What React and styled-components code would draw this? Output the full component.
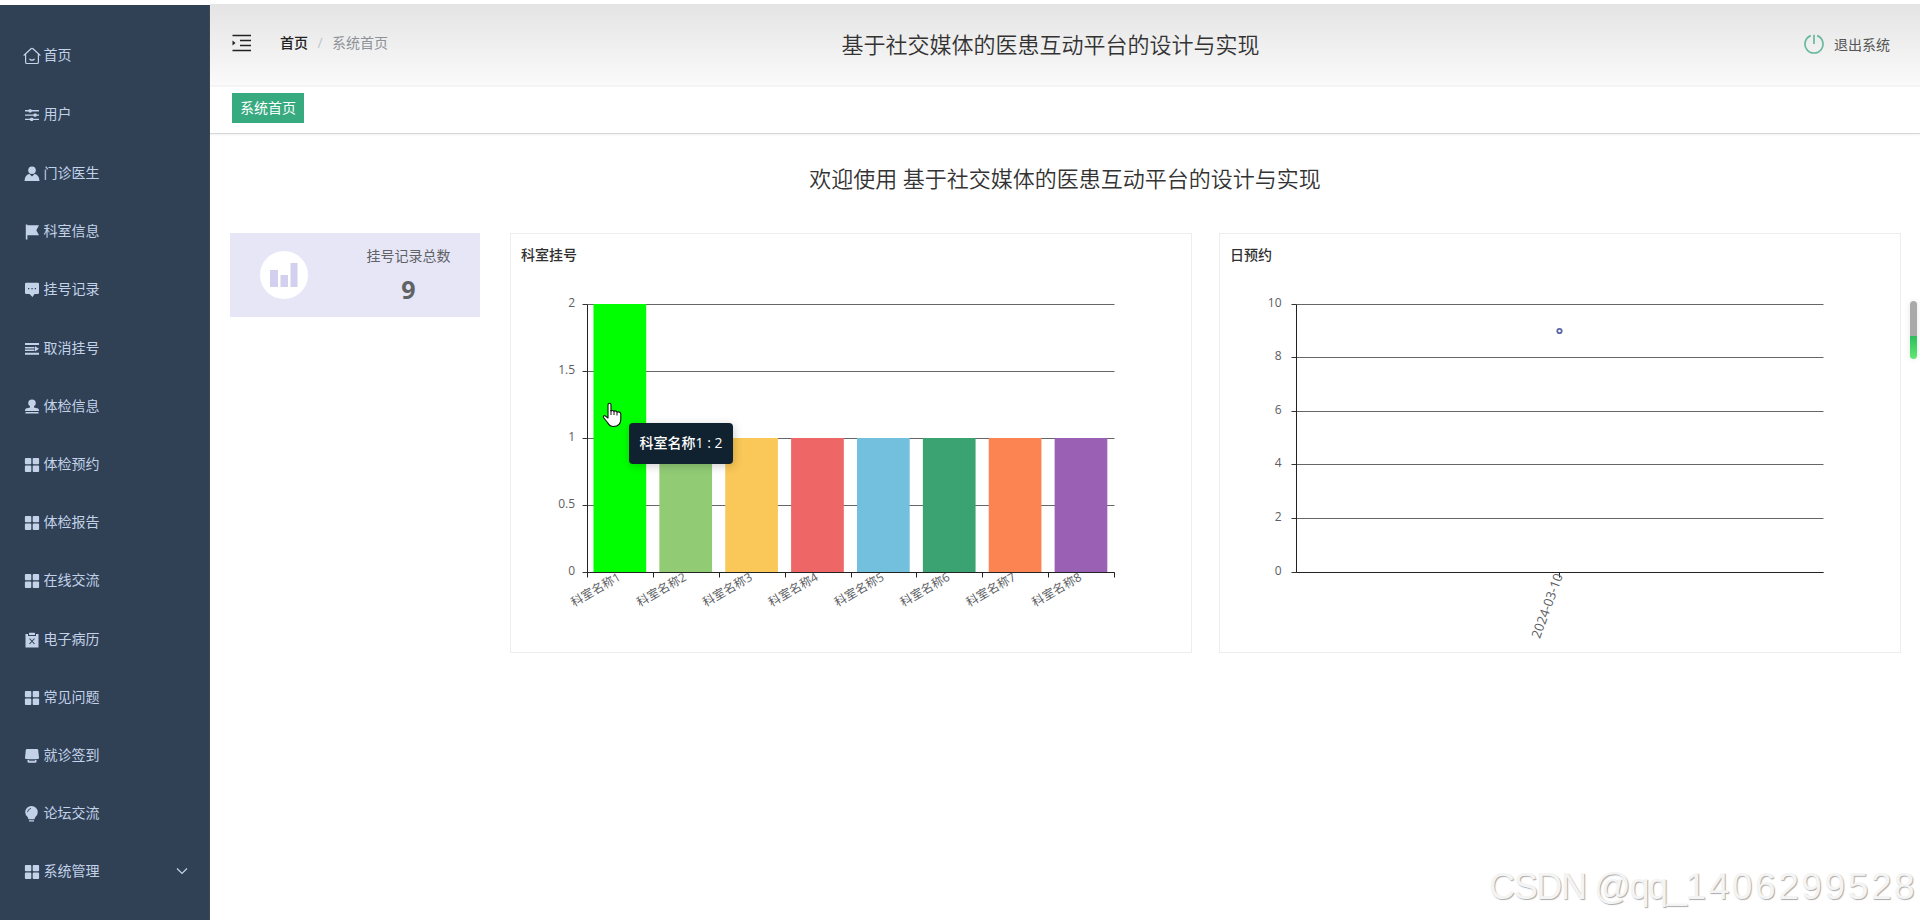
import React from "react";
import styled, { createGlobalStyle } from "styled-components";

const GlobalStyle = createGlobalStyle`
  * { box-sizing: border-box; }
  body {
    margin: 0;
    background: #fff;
    font-family: "Open Sans", "Noto Sans CJK SC", sans-serif;
    font-size: 14px;
    color: #333;
    overflow: hidden;
  }
`;

const Page = styled.div`
  position: relative;
  display: flex;
  width: 1920px;
  height: 920px;
  padding-top: 4px;
`;

const Sidebar = styled.nav`
  width: 210px;
  height: 915px;
  margin-top: 1px;
  padding-top: 19.8px;
  flex: none;
  background: #304156;
  border-right: 1px solid #40474e;
`;

const MenuItem = styled.div`
  display: flex;
  align-items: center;
  height: ${(p) => (p.$tall ? 59.6 : 58.2)}px;
  padding: 0 21px 0 ${(p) => (p.$wide ? 23 : 24)}px;
  color: #c3d2e8;
  line-height: 20px;
`;

const MenuIcon = styled.svg`
  flex: none;
  width: ${(p) => (p.$wide ? 18 : 16)}px;
  height: ${(p) => (p.$wide ? 18 : 16)}px;
  margin: 2px ${(p) => (p.$wide ? 2.5 : 3.5)}px 0 0;
  fill: currentColor;
`;

const MenuLabel = styled.span`
  flex: 1;
`;

const Arrow = styled.svg`
  width: 12px;
  height: 8px;
  fill: none;
  stroke: currentColor;
  stroke-width: 1.2;
`;

const Main = styled.main`
  flex: 1;
  min-width: 0;
`;

const Header = styled.header`
  display: grid;
  grid-template-columns: 1fr auto 1fr;
  align-items: center;
  height: 83px;
  padding: 0 30px 0 22px;
  background: linear-gradient(#e4e4e4, #fafafa);
  border-bottom: 2px solid #f5f5f5;
`;

const HeaderLeft = styled.div`
  display: flex;
  align-items: center;
  padding-bottom: 5px;
`;

const FoldIcon = styled.svg`
  width: 20px;
  height: 18px;
  margin: 1px 28px 0 0;
  stroke: #222;
  stroke-width: 1.3;
  fill: #222;
`;

const Crumb = styled.span`
  color: ${(p) => (p.$current ? "#8e9297" : "#222")};
  font-weight: ${(p) => (p.$current ? 400 : 500)};
`;

const Slash = styled.span`
  width: 24px;
  text-align: center;
  color: #c0c4cc;
`;

const SystemTitle = styled.h1`
  margin: 0 21px 2px 0;
  font-size: 22px;
  font-weight: 350;
  line-height: 30px;
  color: #333;
`;

const Logout = styled.div`
  display: flex;
  align-items: center;
  justify-content: flex-end;
  gap: 10px;
  padding-bottom: 2px;
  color: #555;
`;

const PowerIcon = styled.svg`
  width: 20px;
  height: 20px;
  fill: none;
  stroke: #68b99b;
  stroke-width: 1.7;
`;

const TabBar = styled.div`
  display: flex;
  align-items: center;
  height: 47px;
  padding: 3px 22px 7px;
  border-bottom: 1px solid #d5d7da;
  box-shadow: 0 1px 2px rgba(0, 0, 0, 0.06);
`;

const Tab = styled.div`
  height: 30px;
  padding: 0 8px;
  line-height: 29px;
  color: #fff;
  background: #37aa80;
`;

const Welcome = styled.h2`
  margin: 0;
  padding: 28px 0 0;
  height: 99px;
  font-size: 22px;
  font-weight: 350;
  line-height: 33px;
  color: #333;
  text-align: center;
`;

const Dashboard = styled.section`
  display: flex;
  align-items: flex-start;
  padding-left: 20px;
`;

const StatCard = styled.div`
  display: flex;
  flex: none;
  width: 250px;
  height: 84px;
  margin-right: 30px;
  padding-left: 30px;
  align-items: center;
  background: #e6e6f6;
`;

const StatIcon = styled.svg`
  width: 48px;
  height: 48px;
`;

const StatText = styled.div`
  width: 144px;
  margin-left: 27px;
  padding-top: 5px;
  display: flex;
  flex-direction: column;
  align-items: center;
  color: #606266;
`;

const StatLabel = styled.span`
  line-height: 24px;
  padding-left: 3px;
`;

const StatValue = styled.strong`
  font-family: "Noto Sans", sans-serif;
  font-size: 25px;
  line-height: 43px;
  padding-left: 3px;
`;

const ChartCard = styled.article`
  width: 682px;
  height: 420px;
  margin-right: 27px;
  border: 1px solid #ededed;
  flex: none;
`;

const Chart = styled.svg`
  display: block;
  width: 680px;
  height: 418px;
`;

const AxisText = styled.text`
  font-size: ${(p) => p.$size || 12}px;
  fill: #5c5e63;
`;

const ChartTitle = styled.text`
  font-size: 14px;
  font-weight: 500;
  fill: #303030;
`;

const Tooltip = styled.div`
  position: absolute;
  left: 629px;
  top: 423px;
  width: 104px;
  height: 41px;
  border-radius: 4px;
  background: #10212f;
  color: #fff;
  font-weight: 500;
  line-height: 40px;
  text-align: center;
  white-space: nowrap;
  box-shadow: 1px 2px 10px rgba(0, 0, 0, 0.2);
`;

const Pointer = styled.svg`
  position: absolute;
  left: 602px;
  top: 402px;
  width: 20px;
  height: 26px;
`;

const Gauge = styled.div`
  position: absolute;
  left: 1910px;
  top: 301px;
  width: 7px;
  height: 58px;
  border-radius: 4px;
  background: linear-gradient(#a9a9a9 0 35px, #2dbd5c 35px, #62e873 100%);
  box-shadow: 0 0 6px rgba(0, 0, 0, 0.1);
`;

const Watermark = styled.div`
  position: absolute;
  left: 1489px;
  top: 865px;
  font-family: "Liberation Sans", sans-serif;
  font-size: 36px;
  line-height: 44px;
  letter-spacing: -1.35px;
  white-space: nowrap;
  color: #f4f4f4;
  text-shadow: 1px 1px 1px #aaa;
`;

const WatermarkNumber = styled.span`
  font-size: 37px;
  letter-spacing: 2.6px;
`;

const icons = {
  home: (
    <g fill="none" stroke="currentColor" strokeWidth="1.2" strokeLinejoin="round" strokeLinecap="round">
      <path d="M2.6 7.2V15.2a1.3 1.3 0 0 0 1.3 1.3H14.1a1.3 1.3 0 0 0 1.3-1.3V7.2M1 8.2 8 1.8a1.5 1.5 0 0 1 2 0L17 8.2" />
      <path d="M6.8 12.2q2.2 2 4.4 0" />
    </g>
  ),
  sliders: (
    <g>
      <path d="M1 3.1h14v1.400H1zM1 7.400h14v1.400H1zM1 11.700h14v1.400H1z" />
      <rect x="4.500" y="2.200" width="3.200" height="3.200" rx="1" />
      <rect x="9.500" y="6.500" width="3.200" height="3.200" rx="1" />
      <rect x="6" y="10.800" width="3.200" height="3.200" rx="1" />
    </g>
  ),
  user: (
    <g>
      <circle cx="8" cy="4.2" r="3.8" />
      <path d="M.5 15Q1 8.400 5.600 8.100L8 10.500 10.400 8.100Q15 8.400 15.500 15z" />
    </g>
  ),
  flag: <path d="M1.800 .5h1.600V1.300H15L12.300 6.200 15 11.200H3.400V15.500H1.800z" />,
  chat: (
    <path fillRule="evenodd" d="M2.200 .8H13.800Q15 .8 15 2V10.800Q15 12 13.800 12H10.500L8.500 15 5.500 12H2.200Q1 12 1 10.800V2Q1 .8 2.200 .8ZM4 6v1.300h1.300V6ZM7.400 6v1.300h1.300V6ZM10.700 6v1.300H12V6Z" />
  ),
  list: (
    <path d="M1 2h14v2H1zM1 5.900h9.500v1.500H1zM1 8.400h9.500v1.500H1zM11 5.200 15 7.800 11 10.400zM1 11.800h14v2H1z" />
  ),
  stamp: (
    <path d="M8 .5A3.800 3.800 0 0 1 11.800 4.200Q11.800 6 10 7.200V8.600L14 9.600Q15 10 15 12H1Q1 10 2 9.600L6 8.600V7.200Q4.200 6 4.200 4.200A3.800 3.800 0 0 1 8 .5ZM1.500 13h13v1.400H1.500z" />
  ),
  grid: (
    <g>
      <rect x=".9" y=".9" width="6.400" height="6.400" rx="1" />
      <rect x="8.700" y=".9" width="6.400" height="6.400" rx="1" />
      <rect x=".9" y="8.600" width="6.400" height="6.400" rx="1" />
      <rect x="8.700" y="8.600" width="6.400" height="6.400" rx="1" />
    </g>
  ),
  clipboard: (
    <g>
      <path d="M1.500 2H4V4H12V2H14.500V15.500H1.500z" />
      <rect x="5" y=".7" width="6" height="2.400" rx=".6" />
      <path d="M5.500 6.500 10.500 12M10.500 6.500 5.500 12" stroke="#304156" strokeWidth="1.100" />
    </g>
  ),
  printer: (
    <g>
      <path d="M3 1H13Q14 1 14.200 2L15 9.800Q15 11 14 11H2Q1 11 1 9.800L1.800 2Q2 1 3 1Z" />
      <path d="M3.500 11.800H12.500V13.500Q12.500 14.800 11.200 14.800H4.800Q3.500 14.800 3.500 13.500z" />
      <path d="M5 12.600h6" stroke="#304156" strokeWidth=".8" />
    </g>
  ),
  bulb: (
    <g>
      <path d="M7.500 0A6.300 6.300 0 0 1 13.800 6.200Q13.800 9 11.200 11.200L10.500 13.200H4.500L3.800 11.200Q1.200 9 1.200 6.200A6.300 6.300 0 0 1 7.500 0ZM5 14.300h5v1.300H5z" />
      <path d="M3.500 6.200Q3.800 3 7 2.400" fill="none" stroke="#304156" strokeWidth=".9" />
    </g>
  ),
};

const menu = [
  ["home", "首页"],
  ["sliders", "用户"],
  ["user", "门诊医生"],
  ["flag", "科室信息"],
  ["chat", "挂号记录"],
  ["list", "取消挂号"],
  ["stamp", "体检信息"],
  ["grid", "体检预约"],
  ["grid", "体检报告"],
  ["grid", "在线交流"],
  ["clipboard", "电子病历"],
  ["grid", "常见问题"],
  ["printer", "就诊签到"],
  ["bulb", "论坛交流"],
  ["grid", "系统管理"],
];

const bars = [
  [2, "#00ff00"],
  [1, "#91cc75"],
  [1, "#fac858"],
  [1, "#ee6666"],
  [1, "#73c0de"],
  [1, "#3ba272"],
  [1, "#fc8452"],
  [1, "#9a60b4"],
];

const TOP = 70.5;
const BASE = 338.5;
const LEFT = 76.5;
const WIDTH = 527;

function Axes({ labels, gap }) {
  const step = (BASE - TOP) / (labels.length - 1);
  return (
    <g>
      {labels.map((label, i) => {
        const y = Math.floor(BASE - step * i - 0.5) + 0.5;
        return (
          <g key={label}>
            <line x1={LEFT} x2={LEFT + WIDTH} y1={y} y2={y} stroke="#66666a" />
            <line x1={LEFT - 5} x2={LEFT} y1={y} y2={y} stroke="#333" />
            <AxisText x={LEFT - gap} y={y + 2.5} textAnchor="end">{label}</AxisText>
          </g>
        );
      })}
      <line x1={LEFT} x2={LEFT} y1={TOP} y2={BASE} stroke="#222" />
    </g>
  );
}

function BarChart() {
  const slot = WIDTH / bars.length;
  return (
    <Chart>
      <ChartTitle x="10" y="26">科室挂号</ChartTitle>
      <Axes labels={["0", "0.5", "1", "1.5", "2"]} gap={12.5} />
      {bars.map(([value, color], i) => {
        const height = ((BASE - TOP) * value) / 2;
        return (
          <rect key={color} x={LEFT + slot * i + slot * 0.1 - 0.6} y={BASE - height - 0.5} width={slot * 0.8} height={height} fill={color} />
        );
      })}
      <line x1={LEFT} x2={LEFT + WIDTH} y1={BASE} y2={BASE} stroke="#222" />
      {Array.from({ length: bars.length + 1 }, (_, i) => {
        const x = Math.round(LEFT + slot * i - 0.5) + 0.5;
        return <line key={i} x1={x} x2={x} y1={BASE} y2={BASE + 5} stroke="#222" />;
      })}
      {bars.map(([, color], i) => (
        <AxisText key={color} textAnchor="end" transform={`translate(${LEFT + slot * (i + 0.5) + 1} ${BASE + 7}) rotate(-30)`}>
          科室名称{i + 1}
        </AxisText>
      ))}
    </Chart>
  );
}

function DailyChart() {
  const center = LEFT + WIDTH / 2 - 0.5;
  return (
    <Chart>
      <ChartTitle x="10" y="26">日预约</ChartTitle>
      <Axes labels={["0", "2", "4", "6", "8", "10"]} gap={15} />
      <line x1={LEFT} x2={LEFT + WIDTH} y1={BASE} y2={BASE} stroke="#222" />
      <line x1={center} x2={center} y1={BASE} y2={BASE + 5} stroke="#222" />
      <circle cx={center} cy="97" r="2.200" fill="#fff" stroke="#5b66a8" strokeWidth="1.800" />
      <AxisText $size={13} textAnchor="end" transform={`translate(${center + 3.5} ${BASE + 3}) rotate(-70)`}>
        2024-03-10
      </AxisText>
    </Chart>
  );
}

export default function App() {
  return (
    <>
      <GlobalStyle />
      <Page>
        <Sidebar>
          {menu.map(([icon, label], i) => (
            <MenuItem key={label} $tall={i < 2} $wide={icon === "home"}>
              <MenuIcon $wide={icon === "home"} viewBox={icon === "home" ? "0 0 18 18" : "0 0 16 16"}>
                {icons[icon]}
              </MenuIcon>
              <MenuLabel>{label}</MenuLabel>
              {label === "系统管理" && (
                <Arrow viewBox="0 0 12 8"><path d="M1 1.500 6 6.500 11 1.500" /></Arrow>
              )}
            </MenuItem>
          ))}
        </Sidebar>
        <Main>
          <Header>
            <HeaderLeft>
              <FoldIcon viewBox="0 0 20 18">
                <path d="M.5 1.500H19M8 6.500H19M8 11.500H19M.5 16.500H19" fill="none" />
                <path d="M.5 6.500 3.500 9 .5 11.500z" stroke="none" />
              </FoldIcon>
              <Crumb>首页</Crumb>
              <Slash>/</Slash>
              <Crumb $current>系统首页</Crumb>
            </HeaderLeft>
            <SystemTitle>基于社交媒体的医患互动平台的设计与实现</SystemTitle>
            <Logout>
              <PowerIcon viewBox="0 0 20 20">
                <path d="M6.800 1.600A9 9 0 1 0 13.200 1.600M10 .8V10" />
              </PowerIcon>
              <span>退出系统</span>
            </Logout>
          </Header>
          <TabBar><Tab>系统首页</Tab></TabBar>
          <Welcome>欢迎使用 基于社交媒体的医患互动平台的设计与实现</Welcome>
          <Dashboard>
            <StatCard>
              <StatIcon viewBox="0 0 48 48">
                <circle cx="24" cy="24" r="24" fill="#fff" />
                <path d="M10 19h8v17h-8zM20.500 24h7.500v12h-7.500zM30.500 12h7v24h-7z" fill="#d2d0ee" />
              </StatIcon>
              <StatText>
                <StatLabel>挂号记录总数</StatLabel>
                <StatValue>9</StatValue>
              </StatText>
            </StatCard>
            <ChartCard><BarChart /></ChartCard>
            <ChartCard><DailyChart /></ChartCard>
          </Dashboard>
        </Main>
        <Pointer viewBox="0 0 20 26">
          <path
            d="M6 3Q6 1.200 7.500 1.200T9 3V9Q10.500 7.800 12 9.300Q13.500 8.300 15 10Q18.500 9.500 18.800 12V17.500Q18.500 24.500 11.500 24.500Q7.500 24.500 5.500 20.500L1.500 15.500Q1 13.500 2.800 13.600L6 16Z"
            fill="#fff" stroke="#111" strokeWidth="1.100" strokeLinejoin="round"
          />
          <path d="M9 8V13M12 9V13M15 10V13.500" stroke="#111" fill="none" />
        </Pointer>
        <Tooltip>科室名称1 : 2</Tooltip>
        <Gauge />
        <Watermark>
          CSDN @qq_<WatermarkNumber>1406299528</WatermarkNumber>
        </Watermark>
      </Page>
    </>
  );
}
